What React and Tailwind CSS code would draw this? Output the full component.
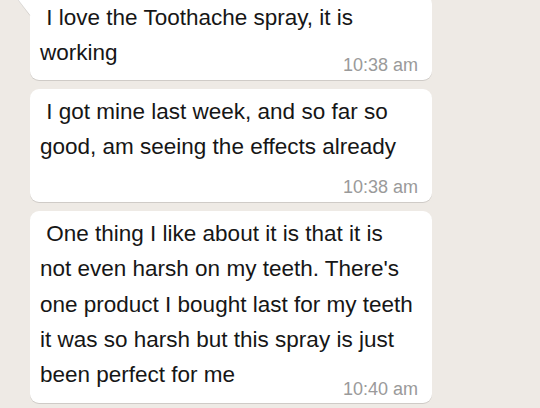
import React from "react";

const font = { fontFamily: '"Liberation Sans", Arial, sans-serif' };

function Bubble({ lines, time, tsClass, tail }) {
  return (
    <div className="relative w-[402px] bg-white rounded-[9px] shadow-[0_1px_0.5px_rgba(0,0,0,0.13)] pl-[10px] pr-[14px] pt-[5px]"
      style={tail ? { borderTopLeftRadius: 0 } : undefined}>
      {tail && (
        <svg className="absolute left-[-16px] top-0" width="17" height="22" viewBox="0 0 17 22">
          <path d="M0 0 L17 0 L17 21 Z" fill="#ffffff" />
          <path d="M0.5 0 L16 20.5" stroke="rgba(0,0,0,0.10)" strokeWidth="1" fill="none" />
        </svg>
      )}
      <div className="text-[22.5px] leading-[35.3px] text-[#161616] whitespace-nowrap">
        {lines.map((l, i) => (
          <div key={i}>{l}</div>
        ))}
      </div>
      <div className={`flex justify-end text-[18px] leading-[20px] text-[#9a9a9a] ${tsClass}`}>
        {time}
      </div>
    </div>
  );
}

export default function App() {
  return (
    <div className="w-[540px] h-[408px] overflow-hidden bg-[#eeeae5]" style={font}>
      <div className="flex flex-col gap-[9px] pl-[30px] mt-[-5px]">
        <Bubble
          tail
          lines={["\u00a0I love the Toothache spray, it is", "working"]}
          time="10:38 am"
          tsClass="mt-[-16px] pb-[5px]"
        />
        <Bubble
          lines={["\u00a0I got mine last week, and so far so", "good, am seeing the effects already"]}
          time="10:38 am"
          tsClass="mt-[13px] pb-[5px]"
        />
        <Bubble
          lines={[
            "\u00a0One thing I like about it is that it is",
            "not even harsh on my teeth. There's",
            "one product I bought last for my teeth",
            "it was so harsh but this spray is just",
            "been perfect for me",
          ]}
          time="10:40 am"
          tsClass="mt-[-14px] pb-[4px]"
        />
      </div>
    </div>
  );
}
